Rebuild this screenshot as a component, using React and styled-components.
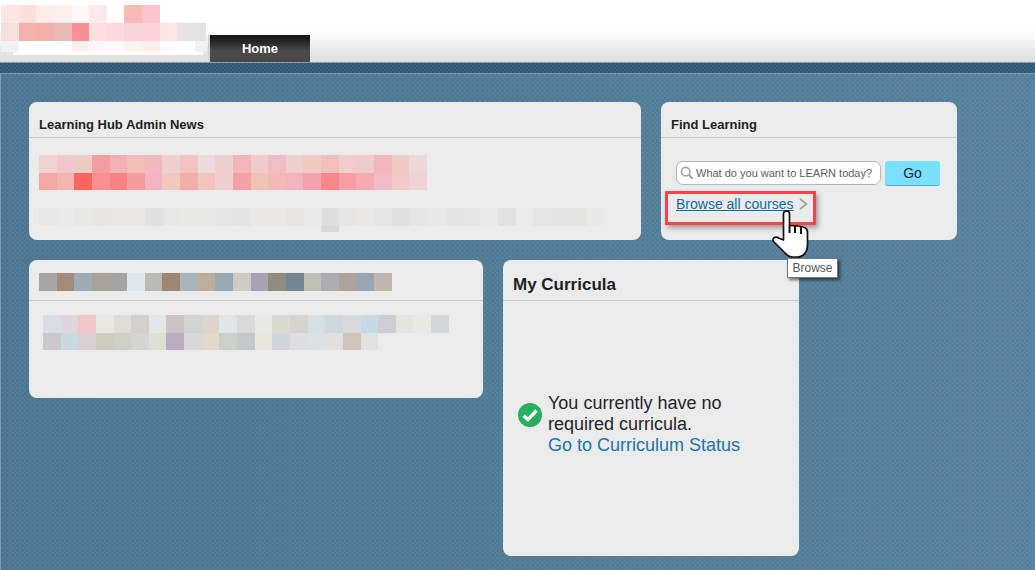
import React from 'react'
import styled, {createGlobalStyle} from 'styled-components'

const GlobalStyle = createGlobalStyle`
  html, body {
    margin: 0;
    padding: 0;
    background: #fff;
  }
  body {
    font-family: 'Liberation Sans', Arial, sans-serif;
  }
`

// blurred out areas of the screenshot, one array per row
const logoRows = [
  ['#ffe6e4', '#ffdfdc', '#ffeceb', '#fff0ee', '#fff8f7', '#ffe9e9', '#ffffff', '#fdb9b6', '#fcc4cf', '#fff', '#fff', '#fff'],
  ['#f6dfdc', '#f6b1ac', '#f3afa9', '#ebb9b5', '#fb8f91', '#fddfe1', '#fdd8dc', '#f6d6db', '#fdd2da', '#fde3e3', '#e4e4e4', '#e4e4e4'],
  ['#f2f2f2', '#fff', '#fff', '#fff', '#ffeff0', '#fff7f7', '#fffafa', '#fff3f2', '#ffeeee', '#fffafb', '#fff', '#f2f2f2']
]

const newsRows = [
  ['#f0d3ce', '#f2c6cb', '#eeccc6', '#f59da0', '#f2b2b5', '#f1bdb8', '#f0b9bb', '#efd0d1', '#f2c3bf', '#eedadb', '#eed0d1', '#f2b6b8', '#f1cbcb', '#efbdc3', '#eed0d0', '#efcbc2', '#f1c0bd', '#f0cdca', '#efcbca', '#f0b8bd', '#efcbc2', '#ecd8d6'],
  ['#f5a7a3', '#f3b5b2', '#fe655c', '#fb8f94', '#f88286', '#f59c9e', '#f3b3c4', '#f0c9bd', '#f3aeaa', '#f1c5bb', '#efd0d1', '#f6a1a5', '#f0c1b5', '#f2b9b6', '#f1b5bd', '#f4a3ae', '#f98688', '#f79ea5', '#f5abb2', '#f1bbc5', '#f2caca', '#efd2d3']
]

const newsGrey = [
  '#e7e6e4', '#e9e9e9', '#e7e7e6', '#e6e5e3', '#e7e6e5', '#e7e6e4', '#e0e0e0', '#e6e6e5', '#e8e8e7', '#e8e8e6', '#e5e5e6', '#e2e3e5', '#e9e8e6', '#e8e7e5', '#e6e5e3', '#e9e9e9',
  '#dedede', '#e6e5e3', '#e8e7e4', '#e5e5e5', '#e0dfe1', '#e5e5e5', '#e8e7e5', '#e4e4e4', '#e5e5e5', '#e9e9e9', '#e1e1e1', '#e9ebea', '#e5e5e5', '#e4e4e6', '#e4e3e0', '#e8e8e6'
]

const headingRow = ['#a7a6a2', '#a28c79', '#9eabb5', '#a8a399', '#a5a2a8', '#dfe6ec', '#b9b9b6', '#9d8672', '#a7b4bb', '#bfac9c', '#9aa8b2', '#cfcac5', '#a7a3b0', '#908a81', '#748592', '#c0bfb1', '#aaaeb3', '#ada39c', '#98a6b4', '#bfb7ad']

const bodyRows = [
  ['#d7dce5', '#dfd5df', '#f0c5c8', '#e7e6e1', '#dfdcd6', '#d3cfcb', '#e1e6e6', '#cbc3c8', '#cfd4d3', '#ddd5cc', '#dfe6ea', '#dadada', '#e8e9e7', '#dbd9d0', '#d4d3ce', '#d3e0e6', '#cfd8dc', '#d7dbdb', '#c6d9e6', '#cfccd3', '#e3e4dd', '#e9e9e4', '#d2d8da'],
  ['#cdc7d0', '#c9d9e2', '#d9d0cf', '#cdccbd', '#cdcfc9', '#d5d6d3', '#dfdfd5', '#b9acc0', '#d8d8d8', '#e2d9c8', '#cdd0c8', '#c4c8cb', '#e9e5dd', '#cfd6df', '#dbdfe0', '#dae0e3', '#e2e0de', '#cfc5ba', '#e0e2e0']
]

const Page = styled.div`
  width: 1035px;
  height: 570px;
  overflow: hidden;
  position: relative;
`

const Header = styled.header`
  height: 63px;
  display: flex;
  align-items: flex-end;
  background: linear-gradient(#fff 0, #fff 30px, #dcdcdc 63px);
  border-bottom: 1px solid #9a9a9a;
  box-sizing: border-box;
`

const Logo = styled.div`
  width: 206px;
  height: 57px;
  margin-right: 2px;
  padding: 5px 0 0 1px;
  box-sizing: border-box;
  align-self: flex-start;
  flex-shrink: 0;
  overflow: hidden;
`

const LogoBar = styled.div`
  width: 190px;
  height: 3px;
  margin-left: 12px;
  background: #fff;
`

const Tab = styled.div`
  width: 100px;
  height: 27px;
  border-left: 2px solid #d2d2d2;
  background: linear-gradient(#111 0, #2c2c2c 8px, #4a4a4a 16px, #484848 100%);
  color: #fff;
  font-size: 13px;
  font-weight: bold;
  text-align: center;
  line-height: 27px;
`

const Strip = styled.div`
  height: 10px;
  background-color: #2f5574;
  background-image:
    linear-gradient(45deg, #3c6482 25%, transparent 25%, transparent 75%, #3c6482 75%),
    linear-gradient(45deg, #3c6482 25%, transparent 25%, transparent 75%, #3c6482 75%);
  background-size: 4px 4px;
  background-position: 0 0, 2px 2px;
`

const Main = styled.main`
  height: 497px;
  box-sizing: border-box;
  padding: 28px 0 0 28px;
  border-left: 1px solid #7f9fb6;
  border-top: 1px solid #7f9fb6;
  display: flex;
  flex-direction: column;
  gap: 20px;
  background-color: #5c86a2;
  background-image:
    linear-gradient(90deg, rgba(40, 75, 100, 0.14), rgba(255, 255, 255, 0.03)),
    radial-gradient(circle at 1.5px 1.5px, #4f7995 1.2px, transparent 1.6px),
    radial-gradient(circle at 1.5px 1.5px, #4f7995 1.2px, transparent 1.6px);
  background-size: auto, 5px 5px, 5px 5px;
  background-position: 0 0, 0 0, 2.5px 2.5px;
`

const Row = styled.div`
  display: flex;
  gap: 20px;
  align-items: flex-start;
`

const Card = styled.section`
  position: relative;
  width: ${p => p.$w}px;
  height: ${p => p.$h}px;
  background: #ebebeb;
  border-radius: 8px;
  box-sizing: border-box;
`

const CardHead = styled.div`
  height: ${p => p.$tall ? 41 : 36}px;
  box-sizing: border-box;
  border-bottom: 1px solid #c9c9c9;
  padding: ${p => p.$big ? '15px 0 0 10px' : p.$tall ? '13px 0 0 10px' : '15px 0 0 10px'};
  color: #1f1f26;
  font-size: ${p => p.$big ? 17 : 13}px;
  font-weight: bold;
  line-height: ${p => p.$big ? 20 : 15}px;
`

const CardBody = styled.div`
  padding: ${p => p.$pad};
`

const Mosaic = styled.div`
  display: grid;
  grid-template-columns: repeat(${p => p.$cols}, ${p => p.$cell}px);
  grid-auto-rows: ${p => p.$rowh}px;
`

const Cell = styled.div`
  background: ${p => p.$c};
`

const NewsGreyWrap = styled.div`
  position: relative;
  margin-top: 18px;
`

const GreyDrip = styled.div`
  position: absolute;
  left: 282px;
  top: 18px;
  width: 18px;
  height: 6px;
  background: #d8d8d8;
`

const SearchRow = styled.div`
  display: flex;
  gap: 4px;
  align-items: flex-start;
`

const SearchBox = styled.div`
  width: 205px;
  height: 24px;
  box-sizing: border-box;
  border: 1.5px solid #b4b4b4;
  border-radius: 7px;
  background: #fff;
  display: flex;
  align-items: center;
  padding-left: 3px;
  gap: 2px;
  color: #555f69;
  font-size: 11px;
  white-space: nowrap;
`

const GoButton = styled.div`
  width: 55px;
  height: 25px;
  box-sizing: border-box;
  border-radius: 3px;
  border-bottom: 1px solid #55aec9;
  background: #7bdfff;
  color: #1d2a33;
  font-size: 14px;
  line-height: 24px;
  text-align: center;
`

const BrowseRow = styled.div`
  display: flex;
  align-items: center;
  gap: 5px;
  margin-top: 9px;
  height: 18px;
`

const BrowseLink = styled.a`
  color: #0c6f9f;
  font-size: 14px;
  text-decoration: underline;
`

const Highlight = styled.div`
  position: absolute;
  left: 4px;
  top: 89px;
  width: 151px;
  height: 34px;
  box-sizing: border-box;
  border: 3px solid #f7444a;
  box-shadow: 2px 3px 5px rgba(0, 0, 0, 0.35);
  pointer-events: none;
`

const Hand = styled.svg`
  position: absolute;
  left: 771px;
  top: 209px;
`

const Tip = styled.div`
  position: absolute;
  left: 787px;
  top: 258px;
  width: 51px;
  height: 20px;
  box-sizing: border-box;
  background: #fff;
  border: 1px solid #767676;
  box-shadow: 2px 2px 3px rgba(0, 0, 0, 0.55);
  color: #575757;
  font-family: 'Liberation Sans', Arial, sans-serif;
  font-size: 12px;
  line-height: 18px;
  text-align: center;
`

const Notice = styled.div`
  display: flex;
  align-items: flex-start;
  gap: 6px;
  padding: 92px 0 0 15px;
`

const IconSlot = styled.div`
  margin-top: 10px;
  flex-shrink: 0;
  height: 24px;
`

const NoticeText = styled.div`
  color: #25252b;
  font-size: 18px;
  line-height: 21px;
  width: 210px;
`

const NoticeLink = styled.a`
  display: block;
  color: #1a76a6;
`

const Blocks = ({rows, cols, cell, rowh}) => (
  <Mosaic $cols={cols} $cell={cell} $rowh={rowh}>
    {rows.flat().map((c, i) => <Cell key={i} $c={c} />)}
  </Mosaic>
)

const CheckIcon = () => (
  <svg width="24" height="24" viewBox="0 0 24 24" style={{display: 'block'}}>
    <circle cx="12" cy="12" r="12" fill="#27ae60" />
    <path d="M5.5 12.5l4.5 4.2L18.5 7.5" fill="none" stroke="#fff" strokeWidth="3.4" />
  </svg>
)

const App = () => (
  <Page>
    <GlobalStyle />
    <Header>
      <Logo>
        <Blocks rows={logoRows.slice(0, 2)} cols={12} cell={17.65} rowh={18} />
        <Blocks rows={[logoRows[2]]} cols={12} cell={17.65} rowh={11} />
        <LogoBar />
      </Logo>
      <Tab>Home</Tab>
    </Header>
    <Strip />
    <Main>
      <Row>
        <Card $w={612} $h={138}>
          <CardHead>Learning Hub Admin News</CardHead>
          <CardBody $pad="17px 0 0 10px">
            <Blocks rows={newsRows} cols={22} cell={17.64} rowh={17.5} />
            <NewsGreyWrap>
              <Blocks rows={[newsGrey]} cols={32} cell={17.66} rowh={18} />
              <GreyDrip />
            </NewsGreyWrap>
          </CardBody>
        </Card>
        <Card $w={296} $h={138}>
          <CardHead>Find Learning</CardHead>
          <CardBody $pad="23px 0 0 15px">
            <SearchRow>
              <SearchBox>
                <svg width="14" height="14" viewBox="0 0 16 16" style={{flexShrink: 0}}>
                  <circle cx="6.5" cy="6.5" r="4.8" fill="none" stroke="#a9a9a9" strokeWidth="2" />
                  <path d="M10 10l4.6 4.6" stroke="#a9a9a9" strokeWidth="2.6" />
                </svg>
                What do you want to LEARN today?
              </SearchBox>
              <GoButton>Go</GoButton>
            </SearchRow>
            <BrowseRow>
              <BrowseLink>Browse all courses</BrowseLink>
              <svg width="9" height="12" viewBox="0 0 9 12">
                <path d="M1 1l6.5 5L1 11" fill="none" stroke="#a3a3a3" strokeWidth="1.8" />
              </svg>
            </BrowseRow>
          </CardBody>
          <Highlight />
        </Card>
      </Row>
      <Row>
        <Card $w={454} $h={138}>
          <CardHead $tall>
            <Blocks rows={[headingRow]} cols={20} cell={17.65} rowh={18} />
          </CardHead>
          <CardBody $pad="14px 0 0 14px">
            <Blocks rows={bodyRows} cols={23} cell={17.65} rowh={17.5} />
          </CardBody>
        </Card>
        <Card $w={296} $h={296}>
          <CardHead $tall $big>My Curricula</CardHead>
          <Notice>
            <IconSlot><CheckIcon /></IconSlot>
            <NoticeText>
              You currently have no required curricula.
              <NoticeLink>Go to Curriculum Status</NoticeLink>
            </NoticeText>
          </Notice>
        </Card>
      </Row>
    </Main>
    <Hand width="38" height="50" viewBox="0 0 38 50">
      <path
        d="M12.5 31V5c0-2 1.3-3.2 3-3.2s3 1.2 3 3.2v11.5c6 0 12 .8 15 2 2 .8 3 2.5 3 5V36c0 7-4 12-10 12h-5c-4 0-6-2-8-4.5L3 33c-1.5-1.5-1.5-3.2 0-4.2s3.5-.8 5 .5z"
        fill="#fff"
        stroke="#111"
        strokeWidth="1.7"
        strokeLinejoin="round"
      />
      <path d="M18.5 17v7M24 17v7M30 18v7" stroke="#111" strokeWidth="2" />
    </Hand>
    <Tip>Browse</Tip>
  </Page>
)

export default App
